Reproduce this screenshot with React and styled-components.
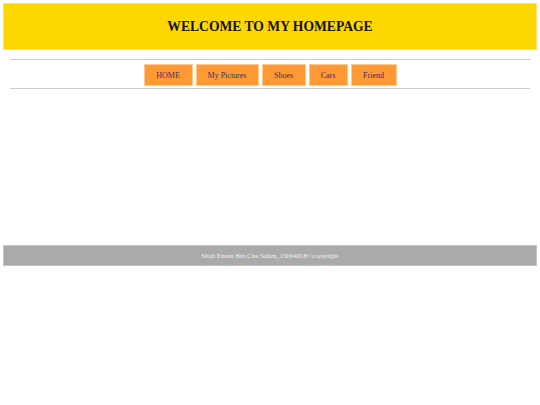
import React from 'react';
import styled, { createGlobalStyle } from 'styled-components';

const GlobalStyle = createGlobalStyle`
  body {
    margin: 3px;
    background: #ffffff;
    font-family: "Liberation Serif", "Times New Roman", serif;
  }
`

const Header = styled.header`
  height: 45px;
  background-color: #ffd700;
  border: 1px solid #f7e27a;
  display: flex;
  align-items: center;
  justify-content: center;
`

const Title = styled.h1`
  margin: 0;
  font-size: 13.6px;
  font-weight: bold;
  color: #111;
`

const NavWrap = styled.nav`
  margin: 9px 7px 0;
  padding: 4px 0 2px;
  border-top: 1px solid #cccccc;
  border-bottom: 1px solid #cccccc;
  display: flex;
  justify-content: center;
  gap: 3px;
`

const NavItem = styled.a`
  display: flex;
  align-items: center;
  justify-content: center;
  height: 20px;
  width: ${(p) => p.w}px;
  background-color: #ff9933;
  border: 1px solid #ffc98f;
  color: #3f2a6e;
  font-size: 8px;
  text-decoration: none;
`

const Content = styled.main`
  height: 156px;
`

const Footer = styled.footer`
  height: 21px;
  background-color: #aaaaaa;
  border: 1px solid #c4c4c4;
  box-sizing: border-box;
  display: flex;
  align-items: center;
  justify-content: center;
  color: #f2f2f2;
  font-size: 6.9px;
`

const links = [
  { label: 'HOME', w: 47 },
  { label: 'My Pictures', w: 61 },
  { label: 'Shoes', w: 42 },
  { label: 'Cars', w: 37 },
  { label: 'Friend', w: 44 },
];

const App = () => {
  return (
    <>
      <GlobalStyle />
      <Header>
        <Title>WELCOME TO MY HOMEPAGE</Title>
      </Header>
      <NavWrap>
        {links.map((l) => (
          <NavItem key={l.label} href="#" w={l.w}>{l.label}</NavItem>
        ))}
      </NavWrap>
      <Content />
      <Footer>Shah Ehsan Bin Che Salim_15b04018©copyright</Footer>
    </>
  );
};

export default App;
